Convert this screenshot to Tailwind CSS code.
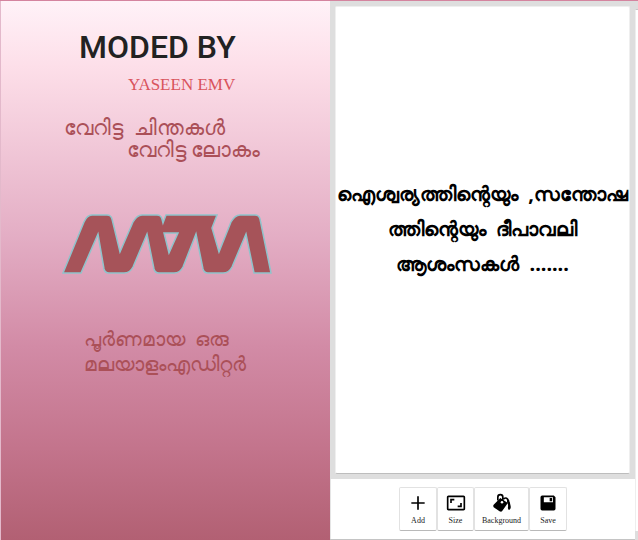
<!DOCTYPE html>
<html lang="ml">
<head>
  <meta charset="UTF-8" />
  <meta name="viewport" content="width=device-width, initial-scale=1.0" />
  <title>Malayalam Editor</title>
  <script src="https://cdn.jsdelivr.net/npm/@tailwindcss/browser@4"></script>
</head>
<body class="min-h-screen grid grid-cols-[330fr_305fr_3px] border-t border-[#d4849f] bg-[#dedede] overflow-hidden font-['Noto_Sans',sans-serif]">
  <!-- splash -->
  <section class="min-w-0 border-l border-l-[#e3b9cb] bg-[linear-gradient(#fff2f8,#fddfe9_12%,#e3adc4_44%,#d28ba6_64%,#c3748c_83%,#b26073)] text-[#ab5058] whitespace-nowrap">
    <h1 class="pl-[78px] pt-[24px] text-[32px] leading-[44px] font-medium text-[#222] font-['Roboto',sans-serif]">MODED BY</h1>
    <p class="pl-[127px] pt-[4px] text-[17px] leading-[24px] text-[#d9535c] font-['Liberation_Serif',serif]">YASEEN EMV</p>
    <p class="pl-[63px] pt-[19px] text-[21px] leading-[22px]">വേറിട്ട&nbsp; ചിന്തകൾ</p>
    <p class="pl-[126px] text-[21px] leading-[22px]">വേറിട്ട ലോകം</p>
    <svg class="ml-[60px] mt-[53px] w-[212px] h-[62px]" viewBox="0 0 212 62" fill="#a65359" stroke="#8fc3cb" stroke-width="1.500">
      <path fill-rule="evenodd" d="M2 60 L23 9 Q26 2 31 2 H46 Q50 2 51 6 L59 39 L72 9 Q76 2 81 2 H96 Q100 2 101 6 L102 10 L105 2 H156 L151 15 L158 39 L170 9 Q174 2 179 2 H194 Q198 2 199 6 L210 60 H193 L185 21 L171 54 Q168 60 162 60 H147 Q143 60 142 56 L135 21 L122 54 Q119 60 113 60 H98 Q94 60 93 56 L86 21 L72 54 Q69 60 63 60 H48 Q44 60 43 56 L37 21 L20 60 Z M103 20 H117 L108 40 Z" />
    </svg>
    <p class="pl-[83px] pt-[51px] text-[20px] leading-[25px]">പൂർണമായ&nbsp; ഒരു</p>
    <p class="pl-[83px] text-[20px] leading-[25px]">മലയാളംഎഡിറ്റർ</p>
  </section>

  <!-- editor -->
  <main class="min-w-0 flex flex-col border-b border-b-[#c4c4c4] bg-white">
    <div class="flex-1 flex bg-[#dedede] p-[5px]">
      <div class="flex-1 min-w-0 flex flex-col items-center justify-center overflow-hidden rounded-[2px] border border-[#efefef] border-b-[#bdbdbd] bg-white pb-[24px] text-center text-[20px] leading-[35px] font-bold text-black whitespace-nowrap">
        <p>ഐശ്വര്യത്തിന്റെയും&nbsp; ,സന്തോഷ</p>
        <p>ത്തിന്റെയും&nbsp; ദീപാവലി</p>
        <p>ആശംസകൾ&nbsp; .......</p>
      </div>
    </div>
    <div class="flex justify-center pt-2 pb-2 border-l border-[#e5e5e5] text-[8px] leading-[10px] text-[#222] font-['Liberation_Serif',serif]">
      <button class="w-[38px] h-[44px] flex flex-col items-center pt-[5px] border border-[#e2e2e2] border-b-[#b9b9b9] rounded-[2px]">
        <svg class="w-[20px] h-[20px]" viewBox="0 0 24 24"><path d="M20 13h-7v7h-2v-7H4v-2h7V4h2v7h7z" /></svg>
        <span class="mt-[3px]">Add</span>
      </button>
      <button class="w-[37px] h-[44px] flex flex-col items-center pt-[5px] border border-[#e2e2e2] border-b-[#b9b9b9] rounded-[2px]">
        <svg class="w-[20px] h-[20px]" viewBox="0 0 24 24"><path d="M19 12h-2v3h-3v2h5zM7 9h3V7H5v5h2zm14-6H3c-1.100 0-2 .9-2 2v14c0 1.100.9 2 2 2h18c1.100 0 2-.9 2-2V5c0-1.100-.9-2-2-2m0 16H3V5h18z" /></svg>
        <span class="mt-[3px]">Size</span>
      </button>
      <button class="w-[55px] h-[44px] flex flex-col items-center pt-[5px] border border-[#e2e2e2] border-b-[#b9b9b9] rounded-[2px]">
        <svg class="w-[20px] h-[20px]" viewBox="0 0 24 24">
          <path d="M10 6 L19 12 L12 22 Q11 23 9 22 L2 17 Q1 15 2 14 Z" />
          <path d="M7 9V5Q7 2 10 2Q13 2 13 5V11M14 7Q18 4 20 10" fill="none" stroke="#000" stroke-width="2" />
          <path d="M18 8Q22 9 22 14Q23 17 22 19Q20 22 19 18Q20 14 18 11Z" />
          <circle cx="12" cy="11" r="1.500" fill="#fff" />
        </svg>
        <span class="mt-[3px]">Background</span>
      </button>
      <button class="w-[38px] h-[44px] flex flex-col items-center pt-[5px] border border-[#e2e2e2] border-b-[#b9b9b9] rounded-[2px]">
        <svg class="w-[20px] h-[20px]" viewBox="0 0 24 24"><path fill-rule="evenodd" d="M5 3h14l2 2v14q0 2-2 2H5q-2 0-2-2V5q0-2 2-2zM7 5v6h11V5zM14 6h3v4h-3z" /></svg>
        <span class="mt-[3px]">Save</span>
      </button>
    </div>
  </main>

  <!-- next page edge -->
  <div class="flex flex-col pt-[8px] pb-[9px]">
    <div class="flex-1 border-t border-l border-t-[#c8c8c8] border-l-[#eee] bg-white"></div>
  </div>
</body>
</html>
